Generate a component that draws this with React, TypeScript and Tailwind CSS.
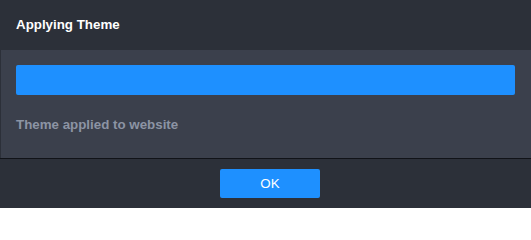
import React from 'react';

export default function App() {
  return (
    <div className="w-[531px] h-[208px] flex flex-col bg-[#2c3039] font-['Liberation_Sans',Arial,sans-serif]">
      <div className="h-[50px] flex items-center px-4">
        <h2 className="text-[13.33px] font-bold text-white">Applying Theme</h2>
      </div>
      <div className="h-[108px] bg-[#3b404c] border-l border-[#2c3039] pl-[15px] pr-4 pt-[15px]">
        <div className="h-[30px] w-full bg-[#1e90ff] rounded-[2px]" />
        <p className="mt-[20px] text-[13.33px] font-bold text-[#8c94a4]">Theme applied to website</p>
      </div>
      <div className="h-px bg-[#111318]" />
      <div className="flex-1 flex items-start pt-[10px] pl-[220px]">
        <button className="w-[100px] h-[29px] bg-[#1e90ff] text-white text-[13.33px] rounded-[2px]">OK</button>
      </div>
    </div>
  );
}
